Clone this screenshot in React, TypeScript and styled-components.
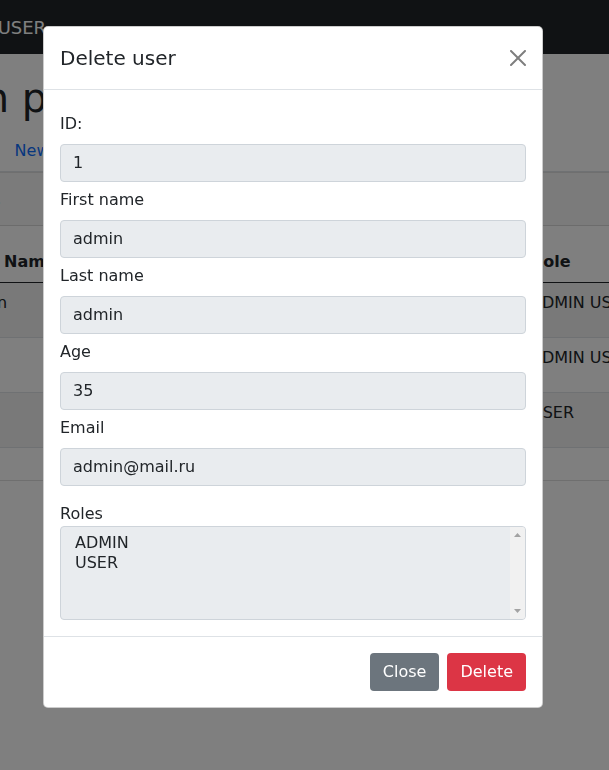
import React from 'react';
import styled, { createGlobalStyle } from 'styled-components';

const GlobalStyle = createGlobalStyle`
  *, *::before, *::after {
    box-sizing: border-box;
  }

  html, body {
    margin: 0;
    height: 100%;
    overflow: hidden;
  }

  body {
    font-family: 'DejaVu Sans', 'Noto Sans', sans-serif;
    font-size: 16px;
    line-height: 1.5;
    color: #212529;
    background: #fff;
  }
`;

/* ---------- page behind the modal (scrolled to the right) ---------- */

const Page = styled.div`
  margin-left: -342px;
  width: 1400px;
`;

const Navbar = styled.nav`
  height: 54px;
  display: flex;
  align-items: center;
  padding: 0 16px;
  font-size: 18px;
  background: #212529;
  color: #fff;
  white-space: nowrap;
`;

const NavEmail = styled.b`
  font-weight: 700;
`;

const Layout = styled.div`
  display: flex;
`;

const Sidebar = styled.aside`
  flex: none;
  width: 207.5px;
  padding: 20px 0 0;
`;

const Pill = styled.div<{ $active?: boolean }>`
  padding: 8px 16px;
  border-radius: 4px;
  color: ${({ $active }) => ($active ? '#fff' : '#0d6efd')};
  background: ${({ $active }) => ($active ? '#0d6efd' : 'transparent')};
`;

const Main = styled.main`
  flex: 1;
  padding: 20px 16px 0;
`;

const Title = styled.h1`
  margin: 0 0 8px;
  font-size: 40px;
  line-height: 1.2;
  font-weight: 500;
`;

const Tabs = styled.ul`
  display: flex;
  margin: 0;
  padding: 0;
  list-style: none;
  border-bottom: 1px solid #dee2e6;
`;

const Tab = styled.li<{ $active?: boolean }>`
  margin-bottom: -1px;
  padding: 8px 16px;
  line-height: 24px;
  border: 1px solid;
  border-color: ${({ $active }) => ($active ? '#dee2e6 #dee2e6 #fff' : 'transparent')};
  border-radius: 4px 4px 0 0;
  background: ${({ $active }) => ($active ? '#fff' : 'transparent')};
  color: ${({ $active }) => ($active ? '#495057' : '#0d6efd')};
`;

const Card = styled.section`
  border: 1px solid rgba(0, 0, 0, 0.125);
  border-radius: 4px;
`;

const CardHeader = styled.header`
  padding: 12px 16px;
  font-size: 24px;
  line-height: 28px;
  background: rgba(0, 0, 0, 0.03);
  border-bottom: 1px solid rgba(0, 0, 0, 0.125);
`;

const CardBody = styled.div`
  padding: 16px;
`;

const Table = styled.table`
  width: 974.5px;
  margin-bottom: 16px;
  table-layout: fixed;
  border-collapse: collapse;
`;

const Th = styled.th<{ $w: number }>`
  width: ${({ $w }) => $w}px;
  padding: 8px;
  text-align: left;
  vertical-align: bottom;
  font-weight: 700;
  line-height: 24px;
  border-bottom: 1px solid #212529;
`;

const Row = styled.tr<{ $striped: boolean }>`
  background: ${({ $striped }) => ($striped ? 'rgba(0, 0, 0, 0.05)' : 'transparent')};
`;

const Td = styled.td`
  padding: 8px;
  vertical-align: top;
  line-height: 24px;
  white-space: nowrap;
  border-bottom: 1px solid #dee2e6;
`;

/* ---------- modal ---------- */

const Backdrop = styled.div`
  position: fixed;
  inset: 0;
  background: rgba(0, 0, 0, 0.5);
`;

const ModalLayer = styled.div`
  position: fixed;
  inset: 0;
  overflow: hidden;
`;

const Dialog = styled.div`
  width: 500px;
  margin: 26px 0 0 43px;
  background: #fff;
  border: 1px solid rgba(0, 0, 0, 0.2);
  border-radius: 5px;
`;

const ModalHeader = styled.div`
  display: flex;
  align-items: center;
  justify-content: space-between;
  padding: 16px;
  border-bottom: 1px solid #dee2e6;
`;

const ModalTitle = styled.h5`
  margin: 0;
  font-size: 20px;
  line-height: 1.5;
  font-weight: 500;
`;

const CloseButton = styled.button`
  display: flex;
  width: 16px;
  height: 16px;
  padding: 0;
  border: 0;
  background: transparent;
  opacity: 0.5;
  cursor: pointer;
`;

const ModalBody = styled.div`
  padding: 16px;
`;

const Label = styled.label<{ $roles?: boolean }>`
  display: block;
  margin: ${({ $roles }) => ($roles ? '16px 0 0' : '6px 0 8px')};
`;

const Field = styled.input`
  display: block;
  width: 100%;
  padding: 6px 12px;
  font: inherit;
  line-height: 24px;
  color: #212529;
  background: #e9ecef;
  border: 1px solid #ced4da;
  border-radius: 4px;
  outline: none;
`;

const RoleBox = styled.div`
  display: flex;
  height: 94px;
  background: #e9ecef;
  border: 1px solid #ced4da;
  border-radius: 4px;
  overflow: hidden;
`;

const RoleList = styled.div`
  flex: 1;
  padding: 6px 36px 6px 12px;
`;

const RoleOption = styled.div`
  padding: 0 2px 1px;
  line-height: 19px;
`;

const ScrollTrack = styled.div`
  flex: none;
  width: 15px;
  display: flex;
  flex-direction: column;
  align-items: center;
  justify-content: space-between;
  padding: 6px 0 6px;
  background: #f1f1f1;
`;

const ModalFooter = styled.div`
  display: flex;
  justify-content: flex-end;
  padding: 12px;
  border-top: 1px solid #dee2e6;
`;

const Button = styled.button<{ $variant: 'secondary' | 'danger' | 'info' }>`
  margin: 4px;
  padding: 6px 12px;
  font: inherit;
  line-height: 24px;
  color: #fff;
  background: ${({ $variant }) =>
    $variant === 'danger' ? '#dc3545' : $variant === 'info' ? '#0dcaf0' : '#6c757d'};
  border: 1px solid transparent;
  border-radius: 4px;
  cursor: pointer;
`;

const TableButton = styled(Button)`
  margin: 0;
`;

const columns = [
  { title: 'ID', w: 50.5 },
  { title: 'First Name', w: 140 },
  { title: 'Last Name', w: 140 },
  { title: 'Age', w: 90 },
  { title: 'Email', w: 204 },
  { title: 'Role', w: 140 },
  { title: 'Edit', w: 100 },
  { title: 'Delete', w: 110 },
];

const users = [
  { id: 1, first: 'admin', last: 'admin', age: 35, email: 'admin@mail.ru', roles: 'ADMIN USER' },
  { id: 2, first: 'test', last: 'test', age: 28, email: 'test@mail.ru', roles: 'ADMIN USER' },
  { id: 3, first: 'user', last: 'user', age: 22, email: 'user@mail.ru', roles: 'USER' },
];

const fields = [
  { label: 'ID:', value: '1' },
  { label: 'First name', value: 'admin' },
  { label: 'Last name', value: 'admin' },
  { label: 'Age', value: '35' },
  { label: 'Email', value: 'admin@mail.ru' },
];

function CloseIcon() {
  return (
    <svg width="16" height="16" viewBox="0 0 16 16" aria-hidden="true">
      <path
        fill="#000"
        d="M.293.293a1 1 0 0 1 1.414 0L8 6.586 14.293.293a1 1 0 1 1 1.414 1.414L9.414 8l6.293 6.293a1 1 0 0 1-1.414 1.414L8 9.414l-6.293 6.293a1 1 0 0 1-1.414-1.414L6.586 8 .293 1.707a1 1 0 0 1 0-1.414z"
      />
    </svg>
  );
}

function ScrollArrow({ down }: { down?: boolean }) {
  return (
    <svg width="7" height="4" viewBox="0 0 7 4" aria-hidden="true">
      <path fill="#a3a3a3" d={down ? 'M0 0h7L3.5 4z' : 'M3.5 0L7 4H0z'} />
    </svg>
  );
}

export default function App() {
  return (
    <>
      <GlobalStyle />
      <Page>
        <Navbar>
          <NavEmail>admin@mail.ru</NavEmail>&nbsp;with roles: ADMIN USER
        </Navbar>
        <Layout>
          <Sidebar>
            <Pill $active>Admin</Pill>
            <Pill>User</Pill>
          </Sidebar>
          <Main>
            <Title>Admin panel</Title>
            <Tabs>
              <Tab $active>User table</Tab>
              <Tab>New User</Tab>
            </Tabs>
            <Card>
              <CardHeader>All users</CardHeader>
              <CardBody>
                <Table>
                  <thead>
                    <tr>
                      {columns.map((c) => (
                        <Th key={c.title} $w={c.w}>
                          {c.title}
                        </Th>
                      ))}
                    </tr>
                  </thead>
                  <tbody>
                    {users.map((u, i) => (
                      <Row key={u.id} $striped={i % 2 === 0}>
                        <Td>{u.id}</Td>
                        <Td>{u.first}</Td>
                        <Td>{u.last}</Td>
                        <Td>{u.age}</Td>
                        <Td>{u.email}</Td>
                        <Td>{u.roles}</Td>
                        <Td>
                          <TableButton $variant="info">Edit</TableButton>
                        </Td>
                        <Td>
                          <TableButton $variant="danger">Delete</TableButton>
                        </Td>
                      </Row>
                    ))}
                  </tbody>
                </Table>
              </CardBody>
            </Card>
          </Main>
        </Layout>
      </Page>

      <Backdrop />
      <ModalLayer>
        <Dialog role="dialog" aria-modal="true">
          <ModalHeader>
            <ModalTitle>Delete user</ModalTitle>
            <CloseButton aria-label="Close">
              <CloseIcon />
            </CloseButton>
          </ModalHeader>
          <ModalBody>
            {fields.map((f) => (
              <div key={f.label}>
                <Label>{f.label}</Label>
                <Field readOnly value={f.value} />
              </div>
            ))}
            <Label $roles>Roles</Label>
            <RoleBox role="listbox">
              <RoleList>
                <RoleOption>ADMIN</RoleOption>
                <RoleOption>USER</RoleOption>
              </RoleList>
              <ScrollTrack>
                <ScrollArrow />
                <ScrollArrow down />
              </ScrollTrack>
            </RoleBox>
          </ModalBody>
          <ModalFooter>
            <Button $variant="secondary">Close</Button>
            <Button $variant="danger">Delete</Button>
          </ModalFooter>
        </Dialog>
      </ModalLayer>
    </>
  );
}
